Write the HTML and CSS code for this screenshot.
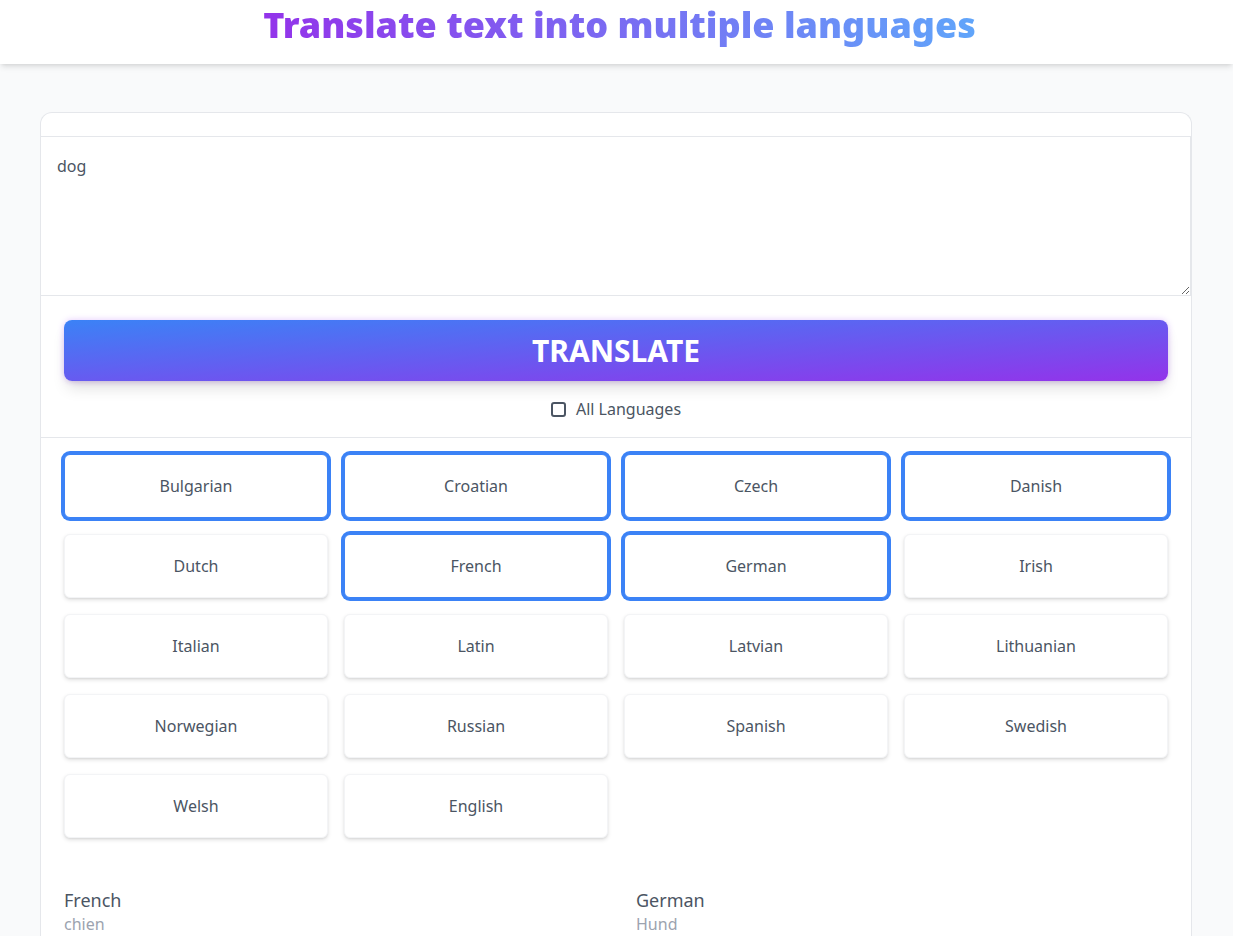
FILE: index.html
```html
<!DOCTYPE html>
<html lang="en">
<head>
<meta charset="utf-8">
<title>Translate</title>
<link rel="stylesheet" href="styles.css">
</head>
<body>
<header class="topbar">
  <h1 class="title">Translate text into multiple languages</h1>
</header>
<main class="main">
  <section class="card">
    <div class="card-spacer"></div>
    <textarea class="input">dog</textarea>
    <div class="actions">
      <button class="translate-btn">TRANSLATE</button>
      <label class="all-lang"><span class="box"></span>All Languages</label>
    </div>
    <div class="divider"></div>
    <div class="lang-grid">
      <button class="lang selected">Bulgarian</button>
      <button class="lang selected">Croatian</button>
      <button class="lang selected">Czech</button>
      <button class="lang selected">Danish</button>
      <button class="lang">Dutch</button>
      <button class="lang selected">French</button>
      <button class="lang selected">German</button>
      <button class="lang">Irish</button>
      <button class="lang">Italian</button>
      <button class="lang">Latin</button>
      <button class="lang">Latvian</button>
      <button class="lang">Lithuanian</button>
      <button class="lang">Norwegian</button>
      <button class="lang">Russian</button>
      <button class="lang">Spanish</button>
      <button class="lang">Swedish</button>
      <button class="lang">Welsh</button>
      <button class="lang">English</button>
    </div>
    <div class="results">
      <div class="result">
        <div class="result-lang">French</div>
        <div class="result-text">chien</div>
      </div>
      <div class="result">
        <div class="result-lang">German</div>
        <div class="result-text">Hund</div>
      </div>
    </div>
  </section>
</main>
</body>
</html>
```

FILE: styles.css
```css
* { box-sizing: border-box; }
html, body { margin: 0; padding: 0; }
body {
  font-family: "Noto Sans", "Open Sans", sans-serif;
  background: #f9fafb;
  color: #4b5563;
}
.topbar {
  background: #fff;
  height: 64px;
  padding-left: 6px;
  display: flex;
  justify-content: center;
  align-items: flex-start;
  box-shadow: 0 4px 6px -1px rgba(0,0,0,0.1), 0 2px 4px -2px rgba(0,0,0,0.1);
  position: relative;
  z-index: 1;
}
.title {
  margin: 0;
  font-size: 36px;
  line-height: 50px;
  font-weight: 900;
  background: linear-gradient(to right, #9333ea, #60a5fa);
  -webkit-background-clip: text;
  background-clip: text;
  color: transparent;
}
.main {
  padding: 48px 41px 0 40px;
}
.card {
  background: #fff;
  border: 1px solid #e5e7eb;
  border-bottom: none;
  border-radius: 12px 12px 0 0;
  overflow: hidden;
}
.card-spacer { height: 23px; }
.input {
  display: block;
  width: 100%;
  height: 160px;
  margin: 0;
  border: none;
  border-top: 1px solid #e5e7eb;
  border-bottom: 1px solid #e5e7eb;
  border-right: 1px solid #e5e7eb;
  padding: 17px 16px;
  font-family: "Noto Sans", sans-serif;
  font-size: 16px;
  line-height: 24px;
  color: #4b5563;
  resize: vertical;
  outline: none;
}
.actions {
  padding: 24px 23px 16px;
  display: flex;
  flex-direction: column;
  align-items: center;
}
.translate-btn {
  width: 100%;
  height: 61px;
  border: none;
  border-radius: 8px;
  background: linear-gradient(to bottom right, #3b82f6, #9333ea);
  color: #fff;
  font-family: "Noto Sans", sans-serif;
  font-weight: 700;
  font-size: 30px;
  box-shadow: 0 10px 15px -3px rgba(0,0,0,0.12), 0 4px 6px -4px rgba(0,0,0,0.1), 0 0 6px rgba(192,132,252,0.45);
  cursor: pointer;
}
.all-lang {
  margin-top: 16px;
  display: flex;
  align-items: center;
  gap: 10px;
  font-size: 16px;
  line-height: 24px;
  color: #4b5563;
}
.box {
  width: 15px;
  height: 15px;
  border: 2px solid #4b5563;
  border-radius: 3px;
  display: inline-block;
}
.divider {
  height: 1px;
  background: #e5e7eb;
}
.lang-grid {
  display: grid;
  grid-template-columns: repeat(4, 1fr);
  gap: 16px;
  padding: 16px 23px 0;
}
.lang {
  height: 64px;
  background: #fff;
  border: 1px solid #f3f4f6;
  border-radius: 6px;
  font-family: "Noto Sans", sans-serif;
  font-size: 16px;
  color: #4b5563;
  box-shadow: 0 2px 4px rgba(0,0,0,0.12), 0 1px 2px rgba(0,0,0,0.06);
  cursor: pointer;
}
.lang.selected {
  border: 1px solid #3b82f6;
  box-shadow: 0 0 0 3px #3b82f6;
}
.results {
  display: grid;
  grid-template-columns: 1fr 1fr;
  column-gap: 40px;
  padding: 49px 23px 24px;
}
.result-lang {
  font-size: 18px;
  line-height: 26px;
  color: #4b5563;
}
.result-text {
  font-size: 16px;
  line-height: 22px;
  color: #9ca3af;
}
```
